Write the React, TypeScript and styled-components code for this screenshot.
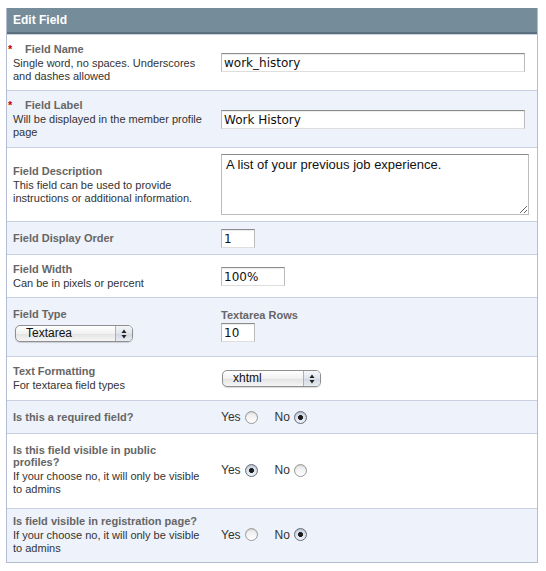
import React from "react";
import styled, { createGlobalStyle } from "styled-components";

const GlobalStyle = createGlobalStyle`
  html, body {
    margin: 0;
    padding: 0;
    background: #ffffff;
  }
  body {
    font-family: "Liberation Sans", Arial, sans-serif;
  }
`;

// === 스타일 정의 ===

const Panel = styled.div`
  width: 532px;
  margin: 8px 0 0 6px;
  border: 1px solid #b3bcd2;
  border-top: none;
  box-sizing: border-box;
`;

const Header = styled.div`
  height: 26px;
  background: #758c9b;
  border-bottom: 2px solid #5b6f7c;
  box-sizing: border-box;
  padding-left: 6px;
  color: #ffffff;
  font-weight: bold;
  font-size: 12px;
  line-height: 24px;
`;

const Row = styled.div<{ $alt?: boolean; $pt?: number; $pb?: number }>`
  display: grid;
  grid-template-columns: 214px 1fr;
  align-items: center;
  padding: ${(p) => p.$pt ?? 8}px 0 ${(p) => p.$pb ?? p.$pt ?? 8}px;
  background: ${(p) => (p.$alt ? "#eef2fa" : "#ffffff")};
  border-top: 1px solid #c9d0e1;
  &:first-of-type {
    border-top: none;
  }
`;

const LabelCell = styled.div`
  padding: 0 18.5px 0 6px;
`;

const ValueCell = styled.div`
  display: flex;
  flex-direction: column;
  align-items: flex-start;
`;

const Label = styled.div`
  font-size: 11px;
  font-weight: bold;
  color: #666666;
  line-height: 12px;
  margin-bottom: 2px;
  &:last-child {
    margin-bottom: 0;
  }
`;

const Star = styled.span`
  display: inline-block;
  width: 17px;
  margin-left: -5px;
  color: #cc0000;
`;

const Desc = styled.div`
  font-size: 11px;
  color: #333333;
  line-height: 13px;
`;

const TextInput = styled.input<{ $width: number }>`
  width: ${(p) => p.$width}px;
  height: 19px;
  box-sizing: border-box;
  margin: 0;
  padding: 1px 2px 0;
  border: 1px solid #bcbcbc;
  border-top-color: #8c8c8c;
  border-bottom-color: #dedede;
  box-shadow: inset 0 1px 1px rgba(0, 0, 0, 0.08);
  font-family: "DejaVu Sans", "Liberation Sans", sans-serif;
  font-size: 12px;
  color: #111111;
  background: #ffffff;
  outline: none;
`;

const TextArea = styled.textarea`
  width: 308px;
  height: 61px;
  box-sizing: border-box;
  margin: 0;
  padding: 2px 4px;
  border: 1px solid #bcbcbc;
  border-top-color: #8c8c8c;
  font-family: "Liberation Sans", Arial, sans-serif;
  font-size: 13px;
  color: #111111;
  outline: none;
`;

const SelectBox = styled.div<{ $width: number; $inset?: number }>`
  display: flex;
  align-items: center;
  width: ${(p) => p.$width}px;
  height: 17px;
  box-sizing: border-box;
  margin-left: ${(p) => p.$inset ?? 1}px;
  border: 1px solid #8e8e8e;
  border-radius: 5px;
  background: linear-gradient(#ffffff 0%, #f1f1f1 50%, #e2e2e2 51%, #f6f6f6 100%);
  box-shadow: 0 1px 1px rgba(0, 0, 0, 0.15);
  font-size: 12px;
  color: #111111;
`;

const SelectText = styled.span`
  flex: 1;
  padding-left: 10px;
  line-height: 15px;
`;

const SelectArrows = styled.span`
  width: 16px;
  height: 15px;
  display: flex;
  align-items: center;
  justify-content: center;
  border-left: 1px solid #b0b0b0;
  background: linear-gradient(#f4f6fa 0%, #dfe4ec 50%, #cfd6e2 51%, #e8ecf2 100%);
  border-radius: 0 4px 4px 0;
`;

const FieldTypeSelect = styled.div`
  margin-top: 5px;
`;

const RadioGroup = styled.div`
  display: flex;
  align-items: center;
  font-size: 12px;
  color: #333333;
`;

const RadioOption = styled.label`
  display: flex;
  align-items: center;
  gap: 4px;
  margin-right: 17px;
`;

const Radio = styled.span<{ $checked?: boolean }>`
  width: 13px;
  height: 13px;
  box-sizing: border-box;
  border-radius: 50%;
  border: 1px solid ${(p) => (p.$checked ? "#666b78" : "#9a9a9a")};
  background: ${(p) =>
    p.$checked
      ? "radial-gradient(circle at 50% 50%, #1c1c1c 0 2.2px, transparent 2.6px), linear-gradient(#c9d3e3, #eef2f8)"
      : "linear-gradient(#e9e9e9, #ffffff)"};
  box-shadow: inset 0 1px 1px rgba(0, 0, 0, 0.12);
`;

const SubLabel = styled(Label)`
  margin-bottom: 2px;
`;

const Arrows = () => (
  <svg width="6" height="10" viewBox="0 0 6 10">
    <path d="M3 0.5 L5.5 4 L0.5 4 Z" fill="#222" />
    <path d="M3 9.5 L5.5 6 L0.5 6 Z" fill="#222" />
  </svg>
);

const Select = ({ value, width, inset }: { value: string; width: number; inset?: number }) => (
  <SelectBox $width={width} $inset={inset}>
    <SelectText>{value}</SelectText>
    <SelectArrows>
      <Arrows />
    </SelectArrows>
  </SelectBox>
);

const YesNo = ({ yes }: { yes: boolean }) => (
  <RadioGroup>
    <RadioOption>
      Yes <Radio $checked={yes} />
    </RadioOption>
    <RadioOption>
      No <Radio $checked={!yes} />
    </RadioOption>
  </RadioGroup>
);

const App = () => {
  return (
    <>
      <GlobalStyle />
      <Panel>
        <Header>Edit Field</Header>

        <Row $pt={7.5}>
          <LabelCell>
            <Label>
              <Star>*</Star>Field Name
            </Label>
            <Desc>Single word, no spaces. Underscores and dashes allowed</Desc>
          </LabelCell>
          <ValueCell>
            <TextInput $width={304} defaultValue="work_history" readOnly />
          </ValueCell>
        </Row>

        <Row $alt>
          <LabelCell>
            <Label>
              <Star>*</Star>Field Label
            </Label>
            <Desc>Will be displayed in the member profile page</Desc>
          </LabelCell>
          <ValueCell>
            <TextInput $width={304} defaultValue="Work History" readOnly />
          </ValueCell>
        </Row>

        <Row $pt={6}>
          <LabelCell>
            <Label>Field Description</Label>
            <Desc>This field can be used to provide instructions or additional information.</Desc>
          </LabelCell>
          <ValueCell>
            <TextArea defaultValue="A list of your previous job experience." readOnly />
          </ValueCell>
        </Row>

        <Row $alt $pt={6.5}>
          <LabelCell>
            <Label>Field Display Order</Label>
          </LabelCell>
          <ValueCell>
            <TextInput $width={34} defaultValue="1" readOnly />
          </ValueCell>
        </Row>

        <Row $pt={7.5}>
          <LabelCell>
            <Label>Field Width</Label>
            <Desc>Can be in pixels or percent</Desc>
          </LabelCell>
          <ValueCell>
            <TextInput $width={64} defaultValue="100%" readOnly />
          </ValueCell>
        </Row>

        <Row $alt $pt={10} $pb={14}>
          <LabelCell>
            <Label>Field Type</Label>
            <FieldTypeSelect>
              <Select value="Textarea" width={118} inset={2} />
            </FieldTypeSelect>
          </LabelCell>
          <ValueCell>
            <SubLabel>Textarea Rows</SubLabel>
            <TextInput $width={34} defaultValue="10" readOnly />
          </ValueCell>
        </Row>

        <Row $pt={8}>
          <LabelCell>
            <Label>Text Formatting</Label>
            <Desc>For textarea field types</Desc>
          </LabelCell>
          <ValueCell>
            <Select value="xhtml" width={99} />
          </ValueCell>
        </Row>

        <Row $alt $pt={9}>
          <LabelCell>
            <Label>Is this a required field?</Label>
          </LabelCell>
          <ValueCell>
            <YesNo yes={false} />
          </ValueCell>
        </Row>

        <Row $pt={10} $pb={11.5}>
          <LabelCell>
            <Label>Is this field visible in public profiles?</Label>
            <Desc>If your choose no, it will only be visible to admins</Desc>
          </LabelCell>
          <ValueCell>
            <YesNo yes={true} />
          </ValueCell>
        </Row>

        <Row $alt $pt={6} $pb={7}>
          <LabelCell>
            <Label>Is field visible in registration page?</Label>
            <Desc>If your choose no, it will only be visible to admins</Desc>
          </LabelCell>
          <ValueCell>
            <YesNo yes={false} />
          </ValueCell>
        </Row>
      </Panel>
    </>
  );
};

export default App;
